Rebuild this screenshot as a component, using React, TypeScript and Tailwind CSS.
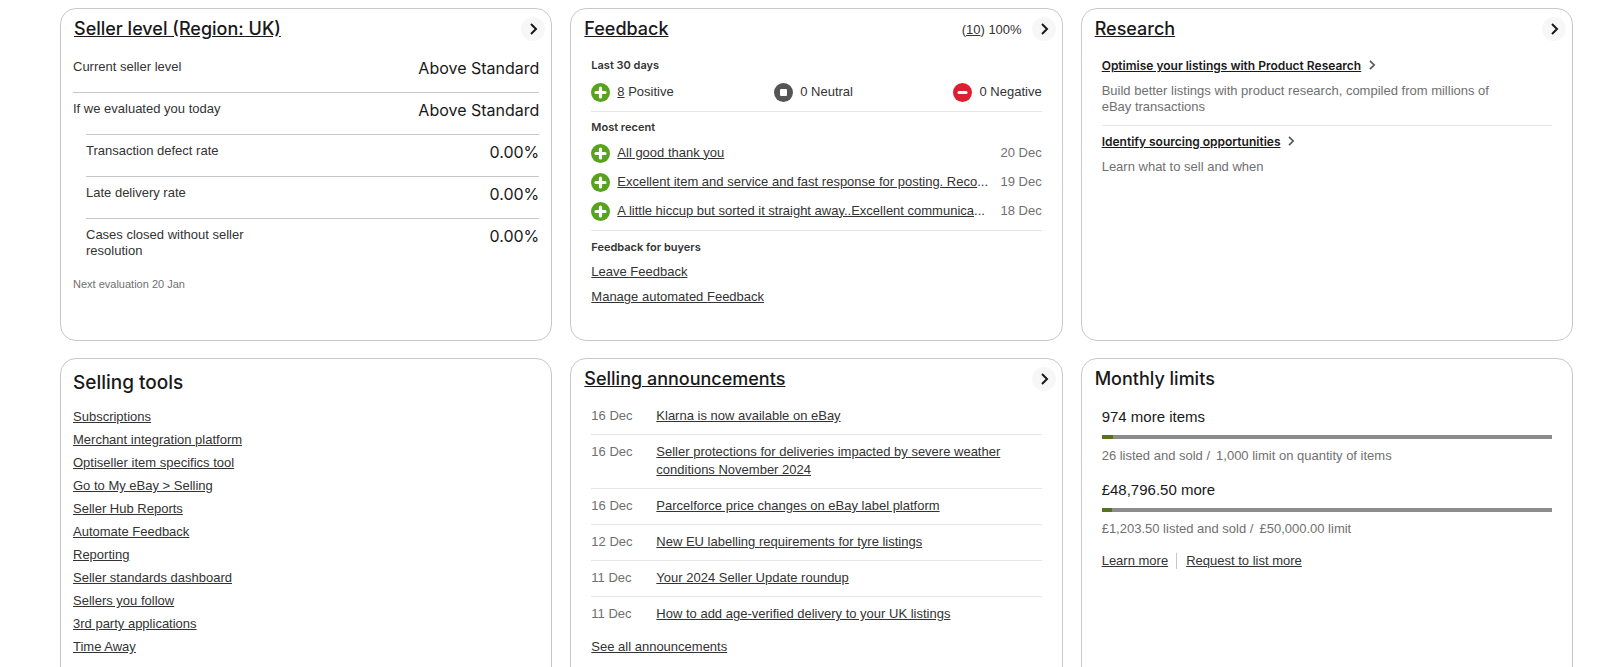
import React from 'react';
import clsx from 'clsx';

const SELLER_RATES = [
  { label: 'Transaction defect rate', value: '0.00%' },
  { label: 'Late delivery rate', value: '0.00%' },
  { label: 'Cases closed without seller resolution', value: '0.00%' },
];

const RECENT_FEEDBACK = [
  { text: 'All good thank you', date: '20 Dec' },
  { text: 'Excellent item and service and fast response for posting. Reco', cut: true, date: '19 Dec' },
  { text: 'A little hiccup but sorted it straight away..Excellent communica', cut: true, date: '18 Dec' },
];

const SELLING_TOOLS = [
  'Subscriptions',
  'Merchant integration platform',
  'Optiseller item specifics tool',
  'Go to My eBay > Selling',
  'Seller Hub Reports',
  'Automate Feedback',
  'Reporting',
  'Seller standards dashboard',
  'Sellers you follow',
  '3rd party applications',
  'Time Away',
];

const ANNOUNCEMENTS = [
  { date: '16 Dec', title: 'Klarna is now available on eBay' },
  { date: '16 Dec', title: 'Seller protections for deliveries impacted by severe weather conditions November 2024' },
  { date: '16 Dec', title: 'Parcelforce price changes on eBay label platform' },
  { date: '12 Dec', title: 'New EU labelling requirements for tyre listings' },
  { date: '11 Dec', title: 'Your 2024 Seller Update roundup' },
  { date: '11 Dec', title: 'How to add age-verified delivery to your UK listings' },
];

const LIMITS = [
  { left: '974 more items', used: '26 listed and sold /', limit: '1,000 limit on quantity of items', percent: 2.6 },
  { left: '£48,796.50 more', used: '£1,203.50 listed and sold /', limit: '£50,000.00 limit', percent: 2.4 },
];

const Chevron: React.FC<{ className?: string }> = ({ className }) => (
  <svg viewBox="0 0 8 12" fill="none" stroke="currentColor" strokeWidth="2" className={className} aria-hidden="true">
    <path d="M1 1l5 5-5 5" />
  </svg>
);

type RatingKind = 'positive' | 'neutral' | 'negative';

const RatingIcon: React.FC<{ kind: RatingKind; className?: string }> = ({ kind, className }) => (
  <svg viewBox="0 0 19 19" className={clsx('size-[19px] shrink-0', className)} aria-hidden="true">
    {kind === 'positive' && (
      <>
        <circle cx="9.5" cy="9.5" r="9.5" fill="#57a31c" />
        <path d="M9.5 5v9M5 9.5h9" stroke="#fff" strokeWidth="3.2" strokeLinecap="round" />
      </>
    )}
    {kind === 'neutral' && (
      <>
        <circle cx="9.5" cy="9.5" r="9.5" fill="#555" />
        <rect x="6" y="6" width="7" height="7" rx="1" fill="#fff" />
      </>
    )}
    {kind === 'negative' && (
      <>
        <circle cx="9.5" cy="9.5" r="9.5" fill="#dd1e31" />
        <path d="M6 9.5h7" stroke="#fff" strokeWidth="3" strokeLinecap="round" />
      </>
    )}
  </svg>
);

interface CardProps {
  title: string;
  linked?: boolean;
  extra?: React.ReactNode;
  children: React.ReactNode;
}

const Card: React.FC<CardProps> = ({ title, linked = true, extra, children }) => (
  <section className="rounded-2xl border border-[#c9c9c9] bg-white">
    <div className="flex h-10 items-center pl-[13px] pr-1.5">
      <h2 className="grow font-['Inter',sans-serif] text-lg font-medium text-[#191919]">
        {linked ? <a href="#" className="underline">{title}</a> : title}
      </h2>
      {extra}
      {linked && (
        <a href="#" aria-label={title} className="flex size-6 items-center justify-center rounded-full bg-[#f7f7f7] text-[#191919]">
          <Chevron className="ml-0.5 h-3 w-2" />
        </a>
      )}
    </div>
    {children}
  </section>
);

const SubHeading: React.FC<{ className?: string; children: React.ReactNode }> = ({ className, children }) => (
  <h3 className={clsx("font-['Inter',sans-serif] text-[11px] leading-4 font-semibold", className)}>{children}</h3>
);

const LevelRow: React.FC<{ label: string; value: string; first?: boolean }> = ({ label, value, first }) => (
  <div className={clsx('flex justify-between pt-2 pb-[15px]', !first && 'border-t border-[#c7c7c7]')}>
    <span className="w-48 leading-4">{label}</span>
    <span className="font-['Inter',sans-serif] text-base leading-[18px] text-[#191919]">{value}</span>
  </div>
);

const ResearchLink: React.FC<{ className?: string; children: React.ReactNode }> = ({ className, children }) => (
  <a href="#" className={clsx("flex w-fit items-start font-['Inter',sans-serif] text-xs leading-4 font-semibold text-[#191919]", className)}>
    <span className="underline">{children}</span>
    <Chevron className="mt-0.5 ml-2 h-[10px] w-[7px] text-[#555]" />
  </a>
);

const App: React.FC = () => {
  return (
    <main className="grid grid-cols-3 gap-x-[18px] gap-y-[17px] bg-white pt-2 pr-[27px] pl-[60px] font-['Liberation_Sans',sans-serif] text-[13px] leading-5 text-[#333]">
      <Card title="Seller level (Region: UK)">
        <div className="px-3 pt-0.5">
          <LevelRow label="Current seller level" value="Above Standard" first />
          <LevelRow label="If we evaluated you today" value="Above Standard" />
          <div className="pl-[13px]">
            {SELLER_RATES.map((rate) => <LevelRow key={rate.label} label={rate.label} value={rate.value} />)}
          </div>
          <p className="mt-0.5 text-[11px] leading-4 text-[#707070]">Next evaluation 20 Jan</p>
        </div>
      </Card>

      <Card
        title="Feedback"
        extra={<span className="mr-[10px] pt-0.5">(<a href="#" className="underline">10</a>) 100%</span>}
      >
        <div className="px-5 pt-2 pb-[34px]">
          <SubHeading>Last 30 days</SubHeading>
          <div className="mt-[9px] flex justify-between border-b border-[#e5e5e5] pb-[9px]">
            <span className="flex items-center gap-[7px]"><RatingIcon kind="positive" /><span><a href="#" className="underline">8</a> Positive</span></span>
            <span className="flex items-center gap-[7px]"><RatingIcon kind="neutral" />0 Neutral</span>
            <span className="flex items-center gap-[7px]"><RatingIcon kind="negative" />0 Negative</span>
          </div>

          <SubHeading className="mt-[7px]">Most recent</SubHeading>
          <ul className="mt-[7px] space-y-2 border-b border-[#e5e5e5] pb-[9px]">
            {RECENT_FEEDBACK.map((item) => (
              <li key={item.date} className="flex items-center gap-[7px]">
                <RatingIcon kind="positive" className="mt-0.5" />
                <span className="grow">
                  <a href="#" className="underline">{item.text}</a>
                  {item.cut && '...'}
                </span>
                <span className="shrink-0 text-[#707070]">{item.date}</span>
              </li>
            ))}
          </ul>

          <SubHeading className="mt-2">Feedback for buyers</SubHeading>
          <a href="#" className="mt-2 block w-fit leading-[18px] underline">Leave Feedback</a>
          <a href="#" className="mt-[7px] block w-fit leading-[18px] underline">Manage automated Feedback</a>
        </div>
      </Card>

      <Card title="Research">
        <div className="px-5 pt-[9px]">
          <ResearchLink>Optimise your listings with Product Research</ResearchLink>
          <p className="mt-[9px] border-b border-[#e5e5e5] pr-8 pb-[10px] leading-4 text-[#707070]">
            Build better listings with product research, compiled from millions of eBay transactions
          </p>
          <ResearchLink className="mt-2">Identify sourcing opportunities</ResearchLink>
          <p className="mt-[9px] leading-4 text-[#707070]">Learn what to sell and when</p>
        </div>
      </Card>

      <section className="rounded-2xl border border-[#c9c9c9] bg-white px-3 pt-[10px] pb-10">
        <h2 className="font-['Inter',sans-serif] text-[19px] leading-7 font-medium text-[#191919]">Selling tools</h2>
        <ul className="mt-2">
          {SELLING_TOOLS.map((tool) => (
            <li key={tool} className="leading-[23px]">
              <a href="#" className="underline">{tool}</a>
            </li>
          ))}
        </ul>
      </section>

      <Card title="Selling announcements">
        <div className="px-5">
          <ul className="divide-y divide-[#e5e5e5]">
            {ANNOUNCEMENTS.map((item) => (
              <li key={item.title} className="flex pt-2 pb-[9px] leading-[18px]">
                <span className="w-[65px] shrink-0 text-[#707070]">{item.date}</span>
                <a href="#" className="underline">{item.title}</a>
              </li>
            ))}
          </ul>
          <a href="#" className="mt-1.5 block w-fit leading-[18px] underline">See all announcements</a>
        </div>
      </Card>

      <Card title="Monthly limits" linked={false}>
        <div className="px-5 pt-2">
          {LIMITS.map((item) => (
            <div key={item.left} className="mb-[15px]">
              <p className="text-[15px] leading-5 text-[#191919]">{item.left}</p>
              <div className="mt-2 h-1 bg-[#8c8c8c]">
                <div className="h-full bg-[#56731f]" style={{ width: `${item.percent}%` }} />
              </div>
              <p className="mt-2 flex gap-1.5 leading-[18px] text-[#707070]">
                <span>{item.used}</span>
                <span>{item.limit}</span>
              </p>
            </div>
          ))}
          <div className="flex items-center leading-4">
            <a href="#" className="border-r border-[#c7c7c7] pr-2 underline">Learn more</a>
            <a href="#" className="pl-[9px] underline">Request to list more</a>
          </div>
        </div>
      </Card>
    </main>
  );
};

export default App;
